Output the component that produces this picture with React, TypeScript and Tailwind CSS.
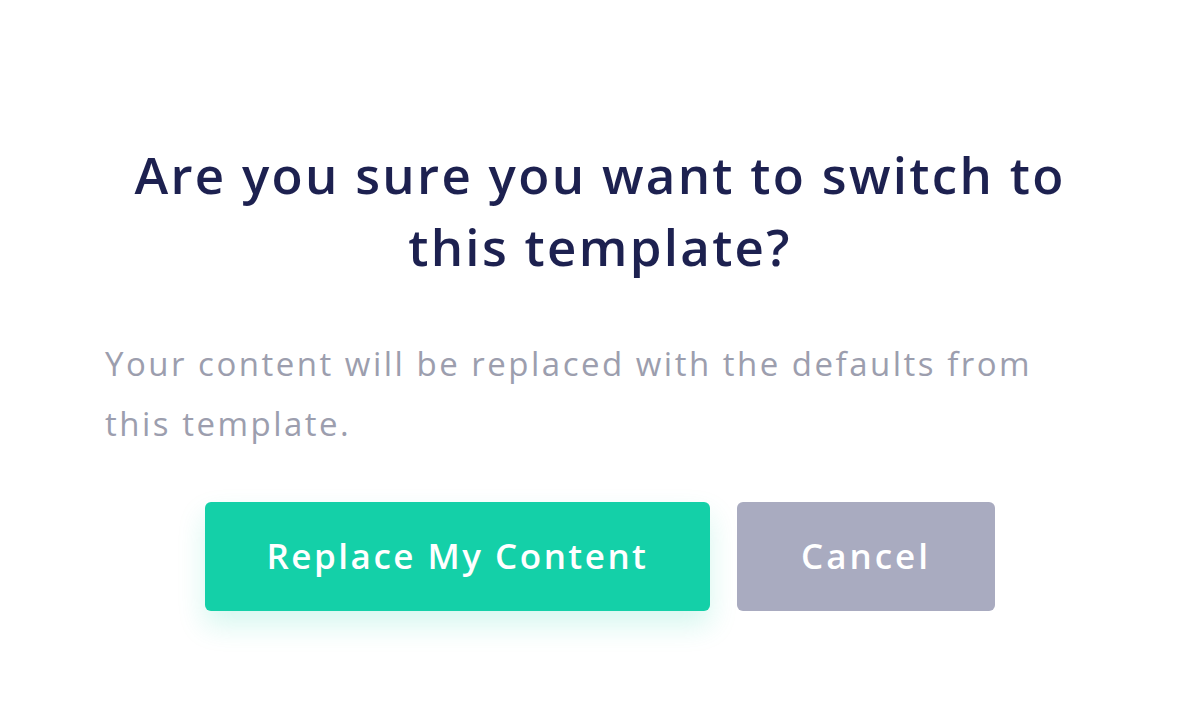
import React from 'react';

const App: React.FC = () => {
  return (
    <div className="w-[1200px] h-[714px] bg-white overflow-hidden" style={{ fontFamily: '"Open Sans", Lato, sans-serif' }}>
      <div className="w-[990px] mx-auto pt-[138px]">
        <h1 className="text-center text-[51px] leading-[72px] font-semibold text-[#1d2150] tracking-[2.3px]">
          Are you sure you want to switch to
          <br />
          this template?
        </h1>
        <p className="mt-[52px] text-[33px] leading-[60px] text-[#9c9eae] tracking-[2.5px]">
          Your content will be replaced with the defaults from this template.
        </p>
        <div className="mt-[48px] flex justify-center gap-[27px]">
          <button className="w-[505px] h-[109px] rounded-[6px] bg-[#14d0a8] text-white text-[35px] font-semibold tracking-[2.5px] shadow-[0_14px_28px_rgba(20,208,168,0.18)]">
            Replace My Content
          </button>
          <button className="w-[258px] h-[109px] rounded-[6px] bg-[#a9abc0] text-white text-[35px] font-semibold tracking-[3px]">
            Cancel
          </button>
        </div>
      </div>
    </div>
  );
};

export default App;
